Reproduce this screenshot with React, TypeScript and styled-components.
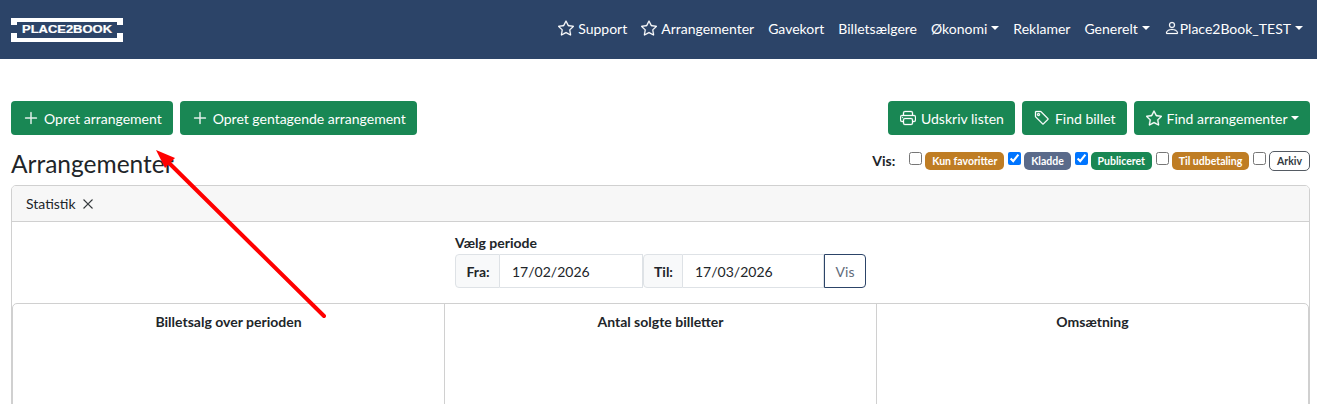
import React from 'react'
import styled, { createGlobalStyle } from 'styled-components'
import { BsPerson, BsPlusLg, BsPrinter, BsStar, BsTag, BsXLg } from 'react-icons/bs'

const GlobalStyle = createGlobalStyle`
  html, body {
    margin: 0;
    height: 404px;
    overflow: hidden;
    background: #ffffff;
  }
  body {
    font-family: Lato, 'Liberation Sans', sans-serif;
    font-size: 14px;
    line-height: 21px;
    color: #212529;
  }
`

const Page = styled.div`
  position: relative;
  width: 1317px;
  height: 404px;
  overflow: hidden;
`
const Navbar = styled.nav`
  display: flex;
  align-items: center;
  justify-content: space-between;
  height: 59px;
  padding: 0 14px 0 11px;
  box-sizing: border-box;
  background: #2c4468;
`
const NavList = styled.div`
  display: flex;
  align-items: center;
  gap: 14px;
  margin-bottom: 3px;
`
const NavLink = styled.a`
  display: flex;
  align-items: center;
  gap: 4px;
  color: #ffffff;
  font-size: 14px;
  white-space: nowrap;
  svg {
    font-size: 16px;
    stroke: currentColor;
    stroke-width: 0.2;
  }
`
const Caret = styled.span`
  display: inline-block;
  border-top: 4px solid currentColor;
  border-left: 4px solid transparent;
  border-right: 4px solid transparent;
`
const UserLink = styled(NavLink)`
  gap: 0;
  ${Caret} {
    margin-left: 4px;
  }
`
const Content = styled.main`
  padding: 42px 7px 0 11px;
`
const Toolbar = styled.div`
  display: flex;
  justify-content: space-between;
`
const ButtonGroup = styled.div`
  display: flex;
  gap: 7px;
`
const Button = styled.button`
  display: flex;
  align-items: center;
  gap: 5px;
  height: 34px;
  padding: 0 11px 0 12px;
  border: 0;
  border-radius: 4px;
  background: #198754;
  color: #ffffff;
  font-family: inherit;
  font-size: 14px;
  white-space: nowrap;
  svg {
    font-size: 16px;
    stroke: currentColor;
    stroke-width: 0.3;
  }
  ${Caret} {
    margin-left: -1.5px;
  }
`
const TitleRow = styled.div`
  display: flex;
  justify-content: space-between;
  height: 50px;
`
const Title = styled.h1`
  margin: 14px 0 0;
  font-size: 24.5px;
  font-weight: 400;
  line-height: 30px;
  color: #212529;
`
const Filters = styled.div`
  display: flex;
  align-items: flex-start;
  padding-top: 15px;
`
const VisLabel = styled.strong`
  margin-right: 14px;
  font-size: 14px;
  line-height: 22px;
`
const Check = styled.input.attrs({ type: 'checkbox' })`
  width: 13px;
  height: 13px;
  margin: 2px 3px 0 0;
`
const Badge = styled.span<{ $bg?: string }>`
  margin: 2px 3.75px 0 0;
  padding: 0 7px;
  height: 18px;
  border-radius: 5px;
  background: ${p => p.$bg || '#ffffff'};
  color: #ffffff;
  font-size: 10.5px;
  font-weight: 700;
  line-height: 18px;
  white-space: nowrap;
`
const OutlineBadge = styled(Badge)`
  margin: 1px 0 0;
  height: 20px;
  box-sizing: border-box;
  border: 1px solid #555b63;
  color: #343a40;
  line-height: 18px;
  padding: 0 7px;
`
const Card = styled.section`
  border: 1px solid #d0d0d0;
  border-radius: 5px;
  overflow: hidden;
`
const CardHeader = styled.header`
  display: flex;
  align-items: center;
  gap: 6px;
  height: 35px;
  padding: 0 14px;
  background: #f7f7f7;
  border-bottom: 1px solid #d0d0d0;
  font-size: 14px;
  svg {
    font-size: 12px;
    stroke: currentColor;
    stroke-width: 0.5;
  }
`
const Period = styled.form`
  display: flex;
  justify-content: center;
  padding: 12px 0 15px;
`
const PeriodLabel = styled.label`
  display: block;
  height: 20px;
  font-size: 14px;
  font-weight: 700;
  line-height: 17px;
`
const DateRow = styled.div`
  display: flex;
  height: 34px;
`
const Addon = styled.span<{ $w: number }>`
  display: flex;
  align-items: center;
  justify-content: center;
  box-sizing: border-box;
  width: ${p => p.$w}px;
  padding-left: 1px;
  border: 1px solid #dee2e6;
  border-radius: 4px 0 0 4px;
  background: #f8f9fa;
  font-weight: 700;
  font-size: 14px;
`
const DateInput = styled.input<{ $w: number }>`
  box-sizing: border-box;
  width: ${p => p.$w}px;
  padding: 0 12px;
  border: 1px solid #dee2e6;
  border-left: 0;
  border-radius: 0;
  font-family: inherit;
  font-size: 14px;
  color: #212529;
`
const VisButton = styled.button`
  width: 42px;
  border: 1px solid #2c4468;
  border-radius: 0 4px 4px 0;
  background: #ffffff;
  color: #5f6b7a;
  font-family: inherit;
  font-size: 14px;
`
const Stats = styled.div`
  display: grid;
  grid-template-columns: 432px 432px 1fr;
  height: 200px;
  border: 1px solid #d0d0d0;
  border-radius: 5px;
`
const StatColumn = styled.div`
  padding-top: 7px;
  text-align: center;
  font-size: 14px;
  font-weight: 700;
  line-height: 21px;
  border-right: 1px solid #d0d0d0;
  &:last-child {
    border-right: 0;
  }
`
const Annotation = styled.svg`
  position: absolute;
  left: 0;
  top: 0;
  pointer-events: none;
`

const Logo = () => (
  <svg width="112" height="24" viewBox="0 0 112 24">
    <path fill="#ffffff" d="M0 0H112V7H106V4H6V7H0ZM0 15H6V20H106V15H112V24H0Z" />
    <text
      x="56"
      y="15.3"
      textAnchor="middle"
      textLength="90"
      lengthAdjust="spacingAndGlyphs"
      fill="#ffffff"
      stroke="#ffffff"
      strokeWidth="0.2"
      fontFamily="'Liberation Sans', sans-serif"
      fontWeight="700"
      fontSize="10"
    >
      PLACE2BOOK
    </text>
  </svg>
)

const App: React.FC = () => (
  <Page>
    <GlobalStyle />
    <Navbar>
      <Logo />
      <NavList>
        <NavLink><BsStar />Support</NavLink>
        <NavLink><BsStar />Arrangementer</NavLink>
        <NavLink>Gavekort</NavLink>
        <NavLink>Billetsælgere</NavLink>
        <NavLink>Økonomi<Caret /></NavLink>
        <NavLink>Reklamer</NavLink>
        <NavLink>Generelt<Caret /></NavLink>
        <UserLink><BsPerson />Place2Book_TEST<Caret /></UserLink>
      </NavList>
    </Navbar>
    <Content>
      <Toolbar>
        <ButtonGroup>
          <Button><BsPlusLg />Opret arrangement</Button>
          <Button><BsPlusLg />Opret gentagende arrangement</Button>
        </ButtonGroup>
        <ButtonGroup>
          <Button><BsPrinter />Udskriv listen</Button>
          <Button><BsTag />Find billet</Button>
          <Button><BsStar />Find arrangementer<Caret /></Button>
        </ButtonGroup>
      </Toolbar>
      <TitleRow>
        <Title>Arrangementer</Title>
        <Filters>
          <VisLabel>Vis:</VisLabel>
          <Check readOnly />
          <Badge $bg="#bf7d24">Kun favoritter</Badge>
          <Check defaultChecked />
          <Badge $bg="#5a6a8a">Kladde</Badge>
          <Check defaultChecked />
          <Badge $bg="#198754">Publiceret</Badge>
          <Check readOnly />
          <Badge $bg="#bf7d24">Til udbetaling</Badge>
          <Check readOnly />
          <OutlineBadge>Arkiv</OutlineBadge>
        </Filters>
      </TitleRow>
      <Card>
        <CardHeader>Statistik <BsXLg /></CardHeader>
        <Period>
          <div>
            <PeriodLabel>Vælg periode</PeriodLabel>
            <DateRow>
              <Addon $w={45}>Fra:</Addon>
              <DateInput $w={143} defaultValue="17/02/2026" />
              <Addon $w={40}>Til:</Addon>
              <DateInput $w={141} defaultValue="17/03/2026" />
              <VisButton type="button">Vis</VisButton>
            </DateRow>
          </div>
        </Period>
        <Stats>
          <StatColumn>Billetsalg over perioden</StatColumn>
          <StatColumn>Antal solgte billetter</StatColumn>
          <StatColumn>Omsætning</StatColumn>
        </Stats>
      </Card>
    </Content>
    <Annotation width="1317" height="404" viewBox="0 0 1317 404">
      <line x1="324" y1="316" x2="165" y2="159" stroke="#ff0000" strokeWidth="4" strokeLinecap="round" />
      <polygon points="156,150 175,158 165,168" fill="#ff0000" />
    </Annotation>
  </Page>
)

export default App
